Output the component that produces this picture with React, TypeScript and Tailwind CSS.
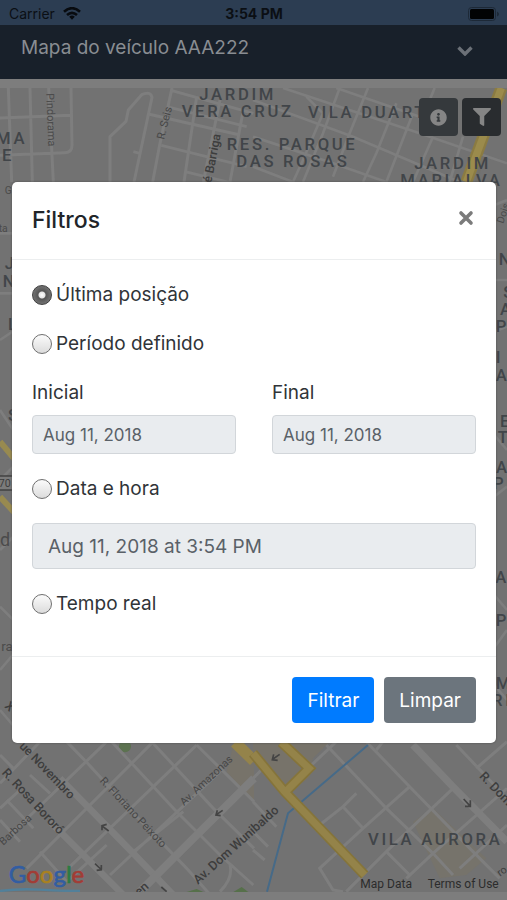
import React, { useState } from 'react';
import { FaFilter, FaInfoCircle } from 'react-icons/fa';

const radioClass =
  'size-5 shrink-0 appearance-none rounded-full border border-[#6f6f6f] bg-linear-to-b from-[#fbfbfb] to-[#dcdcdc] checked:border-[#3f3f3f] checked:bg-[radial-gradient(circle,#ffffff_0,#e4e4e4_3px,#555555_4px,#777777_10px)]';

// Map units are a third of a pixel
function MapBackground() {
  return (
    <svg
      viewBox="0 264 1521 2412"
      preserveAspectRatio="xMidYMin slice"
      className="absolute inset-0 size-full font-[Roboto,sans-serif]"
      role="img"
      aria-label="Mapa"
    >
      <rect y="264" width="1521" height="2412" fill="#727272" />

      {/* north west */}
      <g fill="none" stroke="#7e7e7e" strokeWidth="9" strokeLinejoin="round">
        <path d="M25 264L35 546M90 264L97 546M146 264L160 546M213 264L216 435Q216 458 195 458L0 466M0 354L213 346" />
        <path d="M330 546V410L378 364L385 330L425 284Q452 272 456 292L402 546M400 455L420 460" />
        <path d="M516 264L480 430L458 546M445 342L565 370L720 405M516 272L760 340M484 436L740 500M555 515L740 560M500 320L740 380" />
        <path d="M590 290L552 546M660 300L610 546M728 340L690 546" />
      </g>

      {/* north east */}
      <g transform="translate(759 0)" fill="none" stroke="#7e7e7e" strokeWidth="8">
        <path d="M90 264L500 400L762 490M0 300L300 410L620 546M0 410L240 490L400 546M0 500L120 546M250 264L500 350" />
        <path d="M160 290L210 340L150 480L120 546M260 264L210 400L150 546M345 264L290 400L240 530M430 310L370 460L330 546M480 340L400 546M545 264L530 300M540 410L480 546M630 410L590 546" />
        <path d="M745 264L640 546" stroke="#8b7b42" strokeWidth="36" />
        <path d="M745 264L640 546" stroke="#9b8b4c" strokeWidth="22" />
        <path d="M690 470L670 546" stroke="#72706a" strokeWidth="8" />
      </g>

      {/* side streets left and right of the dialog */}
      <g fill="none" stroke="#7e7e7e" strokeWidth="8">
        <path d="M0 1230L60 1320M0 1440L60 1380M0 1820L60 1880M0 2010L60 1940M0 2130L60 2200M0 1650L60 1590M0 700H60M0 880H60M0 1020L60 980" />
        <path d="M1470 620L1521 600M1470 840H1521M1470 1000L1521 980M1470 1290L1521 1350M1470 1500L1521 1460M1470 1770L1521 1830M1470 1960L1521 1890M1470 2040L1521 2100" />
        <path d="M0 1325L50 1385M0 1490L50 1545" stroke="#988a50" strokeWidth="18" />
      </g>
      <rect x="-20" y="1428" width="60" height="42" fill="#7b7b7b" stroke="#3b3b3b" strokeWidth="4" />

      {/* south west */}
      <g transform="translate(0 2205)" fill="none" stroke="#7e7e7e" strokeWidth="9">
        <path d="M700 30L762 80V200L680 110Z" fill="#77736a" stroke="none" />
        <circle cx="375" cy="34" r="18" fill="#5c7250" stroke="none" />
        <path d="M200 20L262 84L400 235L560 400L640 490M335 20L525 225L660 360L760 450M455 20L640 220L762 340M590 30L762 200" />
        <path d="M90 120L150 175M20 195L100 280M0 255L60 320M120 350L200 440M0 60L40 100" />
        <path d="M120 20L0 145M320 20L30 300M460 20L80 400M590 30L210 395M660 110L330 420M550 230L400 350M320 330L200 440M0 220L60 165" />
        <path d="M690 390Q700 430 660 470" />
        <path d="M180 130L400 355L520 480M150 260L370 480" strokeWidth="20" />
        <path d="M762 130L530 360L420 470" strokeWidth="24" />
        <path d="M705 22L762 78" stroke="#94834a" strokeWidth="34" />
        <path d="M0 468Q60 460 120 464T240 468" stroke="#52809a" strokeWidth="7" />
        <path d="M560 471L590 462L610 471Z M700 471L725 456L745 471Z" fill="#56704a" stroke="none" />
        <g stroke="#444" strokeWidth="5">
          <path d="M326 288L308 274M306 286V272L320 268" />
          <path d="M285 386L302 402M304 390V404L290 406" />
          <path d="M668 226L650 238M652 226L648 240L662 242" />
          <path d="M484 456L500 470" />
        </g>
      </g>

      {/* south east */}
      <g transform="translate(759 2205)" fill="none" stroke="#7e7e7e" strokeWidth="9">
        <path d="M0 20H230L180 70L170 130L100 170L0 60Z" fill="#77736a" stroke="none" />
        <path d="M480 260L540 220L700 370L640 420L560 430Z" fill="#76736b" stroke="none" />
        <path d="M220 30L400 220L540 355L600 420M340 20L470 155L660 350L740 430M270 215L330 280M400 350L470 420M610 30L762 190" />
        <path d="M250 20L165 100M310 175L270 215L200 270M470 155L330 280L200 400L240 465L270 470M600 160L400 350L280 470M762 160L540 355L460 430M762 270L620 400M762 20L670 100M390 20L370 45" />
        <path d="M0 130L30 100M0 200L70 275M0 345L35 375M0 290L45 335" />
        <path d="M480 30L600 155L762 320" strokeWidth="22" />
        <path d="M345 30L105 235L42 470" stroke="#466a88" strokeWidth="6" />
        <path d="M0 55L95 170L335 420M85 22L168 100L100 168" stroke="#85743a" strokeWidth="31" />
        <path d="M0 55L95 170L335 420M85 22L168 100L100 168" stroke="#948349" strokeWidth="21" />
        <g stroke="#444" strokeWidth="5">
          <path d="M80 58L60 72M62 58L58 74L74 76" />
          <path d="M632 192L650 212M652 196V214L636 214" />
        </g>
      </g>

      {/* street names */}
      <g fill="#3d3d3d" fontSize="38">
        <text transform="translate(139 280) rotate(88)" fontSize="33" fill="#4b4b4b">Pindorama</text>
        <text transform="translate(492 420) rotate(-76)" fontSize="33" fill="#474747">R. Seis</text>
        <text transform="translate(634 550) rotate(-79)" fontSize="37" fontWeight="500">é Barriga</text>
        <text transform="translate(12 2120) rotate(44)" fontSize="37" fontWeight="500">X</text>
        <text transform="translate(56 2240) rotate(46)" fontSize="37" fontWeight="500">ue Novembro</text>
        <text transform="translate(4 2320) rotate(47)" fontWeight="500">R. Rosa Bororó</text>
        <text transform="translate(10 2537) rotate(-43)" fontSize="32" fill="#474747">Barbosa</text>
        <text transform="translate(298 2344) rotate(47)" fontSize="33" fill="#474747">R. Floriano Peixoto</text>
        <text transform="translate(552 2418) rotate(-43)" fontSize="32" fill="#474747">Av. Amazonas</text>
        <text transform="translate(594 2654) rotate(-42)" fontWeight="500">Av. Dom Wunibaldo</text>
        <text transform="translate(418 2690) rotate(-42)" fontWeight="500">en</text>
        <text transform="translate(1436 2330) rotate(46)" fontWeight="500">R. Dom</text>
        <text transform="translate(1500 2630) rotate(-35)" fontSize="32">ro</text>
        <text x="14" y="582" fontSize="31" fill="#4b4b4b">G</text>
        <text x="-4" y="695" fontSize="31" fill="#4b4b4b">ta</text>
        <text x="-4" y="1460" fontSize="32">70</text>
        <text x="0" y="1638" fontSize="54" fill="#4b4b4b">d</text>
        <text x="4" y="1952" fontSize="40" fill="#4b4b4b">ra</text>
        <text transform="translate(1510 672) rotate(-72)" fontSize="31" fill="#4b4b4b">Dois</text>
      </g>

      {/* districts */}
      <g fill="#414549" fontSize="50" fontWeight="500" className="tracking-[8px]">
        <text x="598" y="299">JARDIM</text>
        <text x="545" y="350">VERA CRUZ</text>
        <text x="924" y="354">VILA DUART</text>
        <text x="680" y="450">RES. PARQUE</text>
        <text x="709" y="502">DAS ROSAS</text>
        <text x="1243" y="506">JARDIM</text>
        <text x="1201" y="558">MARIALVA</text>
        <text x="-12" y="432">MA</text>
        <text x="6" y="484">E</text>
        <text x="14" y="808">J</text>
        <text x="8" y="860">N</text>
        <text x="24" y="990">L</text>
        <text x="24" y="1262">S</text>
        <text x="1496" y="794">N</text>
        <text x="1510" y="894">S</text>
        <text x="1500" y="944">A</text>
        <text x="1487" y="996">P</text>
        <text x="1487" y="1090">I</text>
        <text x="1487" y="1142">A</text>
        <text x="1500" y="1280">E</text>
        <text x="1493" y="1330">T</text>
        <text x="1488" y="1418">A</text>
        <text x="1479" y="1468">PI</text>
        <text x="1486" y="1750">A</text>
        <text x="1487" y="1878">P</text>
        <text x="1487" y="2068">M</text>
        <text x="1476" y="2118">RI</text>
        <text x="1104" y="2535">VILA AURORA</text>
      </g>

      <text x="26" y="2650" fontSize="72" className="font-[Lato,sans-serif]" strokeWidth="2">
        <tspan fill="#325da2" stroke="#325da2">G</tspan>
        <tspan fill="#a23c35" stroke="#a23c35">o</tspan>
        <tspan fill="#a98121" stroke="#a98121">o</tspan>
        <tspan fill="#325da2" stroke="#325da2">g</tspan>
        <tspan fill="#2c7b43" stroke="#2c7b43">l</tspan>
        <tspan fill="#a23c35" stroke="#a23c35">e</tspan>
      </text>
      <g fill="#2c2c2c" fontSize="36">
        <text x="1081" y="2665">Map Data</text>
        <text x="1283" y="2665">Terms of Use</text>
      </g>
    </svg>
  );
}

function StatusBar() {
  return (
    <div className="grid h-[25px] grid-cols-3 items-center bg-[#2c3d52] pt-[2px] pr-2 pl-[9px] text-[14px] leading-5 text-[#0b0f14]">
      <span className="flex items-center gap-2">
        Carrier
        <svg viewBox="0 0 18 13" className="h-[13px] w-[18px]" fill="none" stroke="#080b0f" strokeWidth="2.6" aria-hidden="true">
          <path d="M1 4.8Q9-2.4 17 4.8M4 8Q9 3.6 14 8" />
          <path d="M6.2 9.8Q9 7.4 11.8 9.8L9 12.8Z" fill="#080b0f" stroke="none" />
        </svg>
      </span>
      <span className="text-center font-bold">3:54 PM</span>
      <svg viewBox="0 0 31 14" className="h-[14px] w-[31px] justify-self-end" aria-hidden="true">
        <rect x="0.5" y="0.5" width="27" height="13" rx="3" fill="none" stroke="#1d2937" />
        <rect x="2" y="2" width="24" height="10" rx="1.5" fill="#020304" />
        <path d="M29 4.5Q31 5.5 31 7T29 9.5Z" fill="#1d2937" />
      </svg>
    </div>
  );
}

export default function App() {
  const [mode, setMode] = useState('last');

  const clearFilters = () => setMode('last');

  return (
    <div className="relative flex min-h-screen flex-col bg-[#7d7d7d] font-[Inter,sans-serif]">
      <StatusBar />
      <header className="flex h-[54px] items-start justify-between bg-[#18202a] pt-2 pr-[34px] pl-[21px] text-[#898d92]">
        <h1 className="text-[19px] leading-[29px]">Mapa do veículo AAA222</h1>
        <button type="button" aria-label="Abrir menu" className="pt-[13px] text-[#6b7077]">
          <svg viewBox="0 0 16 10" className="h-[10px] w-4" fill="none" stroke="currentColor" strokeWidth="3.4">
            <path d="M1.5 1.5L8 8L14.5 1.5" />
          </svg>
        </button>
      </header>

      <main className="relative mt-[9px] mb-2 flex-1 overflow-hidden">
        <MapBackground />
        <div className="absolute top-[10px] right-[6px] flex gap-1">
          <button type="button" aria-label="Informações" className="flex h-[38px] w-[39px] items-center justify-center rounded-sm bg-[#35393c] text-[#858585]">
            <FaInfoCircle size={17} />
          </button>
          <button type="button" aria-label="Filtros" className="flex h-[38px] w-[39px] items-center justify-center rounded-sm bg-[#292c2f] text-[#858585]">
            <FaFilter size={18} />
          </button>
        </div>
      </main>

      <div className="absolute inset-x-0 top-0 pt-[182px] pr-[11px] pl-3">
        <div role="dialog" aria-labelledby="filter-title" className="rounded-[5px] bg-white text-[19px] leading-[29px] text-[#303438] shadow-[0_0_2px_#444]">
          <div className="flex items-start justify-between border-b border-[#eceeef] px-5 py-6">
            <h2 id="filter-title" className="text-[23px] leading-[29px] font-medium text-[#212529]">Filtros</h2>
            <button type="button" aria-label="Fechar" className="pt-1 pr-[2px] text-[#7b7b7b]">
              <svg viewBox="0 0 16 16" className="size-4" stroke="currentColor" strokeWidth="3.6" strokeLinecap="round">
                <path d="M3 3L13 13M13 3L3 13" />
              </svg>
            </button>
          </div>

          <form onSubmit={(e) => e.preventDefault()}>
            <div className="flex flex-col gap-5 px-5 pt-5 pb-[38px]">
              <label className="flex items-center gap-1">
                <input type="radio" name="mode" className={radioClass} checked={mode === 'last'} onChange={() => setMode('last')} />
                Última posição
              </label>
              <label className="flex items-center gap-1">
                <input type="radio" name="mode" className={radioClass} checked={mode === 'period'} onChange={() => setMode('period')} />
                Período definido
              </label>
              <div className="grid grid-cols-2 gap-9">
                <div className="flex flex-col gap-2">
                  <label htmlFor="start">Inicial</label>
                  <input id="start" type="text" readOnly value="Aug 11, 2018" className="h-[39px] w-full rounded-sm border border-[#d2d6da] bg-[#e9ecef] px-[10px] text-[17px] text-[#5a6168] outline-none" />
                </div>
                <div className="flex flex-col gap-2">
                  <label htmlFor="end">Final</label>
                  <input id="end" type="text" readOnly value="Aug 11, 2018" className="h-[39px] w-full rounded-sm border border-[#d2d6da] bg-[#e9ecef] px-[10px] text-[17px] text-[#5a6168] outline-none" />
                </div>
              </div>
              <label className="flex items-center gap-1">
                <input type="radio" name="mode" className={radioClass} checked={mode === 'datetime'} onChange={() => setMode('datetime')} />
                Data e hora
              </label>
              <input type="text" readOnly aria-label="Data e hora" value="Aug 11, 2018 at 3:54 PM" className="h-[46px] w-full rounded-sm border border-[#d2d6da] bg-[#e9ecef] px-[15px] text-[#5a6168] outline-none" />
              <label className="flex items-center gap-1">
                <input type="radio" name="mode" className={radioClass} checked={mode === 'live'} onChange={() => setMode('live')} />
                Tempo real
              </label>
            </div>

            <div className="flex justify-end gap-[10px] border-t border-[#eceeef] px-5 py-5 text-white">
              <button type="submit" className="h-[46px] rounded-sm bg-[#007bff] px-[15px]">Filtrar</button>
              <button type="button" onClick={clearFilters} className="h-[46px] rounded-sm bg-[#6c757d] px-[15px]">Limpar</button>
            </div>
          </form>
        </div>
      </div>
    </div>
  );
}
